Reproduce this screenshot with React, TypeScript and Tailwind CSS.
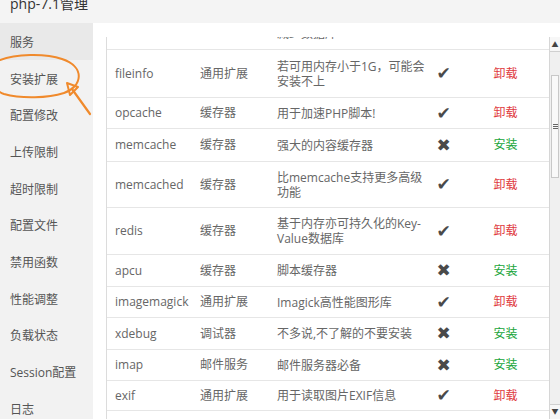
import React from "react";

type Row = {
  name: string;
  type: string;
  desc: string[];
  installed: boolean;
  h: number;
};

const rows: Row[] = [
  { name: "fileinfo", type: "通用扩展", desc: ["若可用内存小于1G，可能会", "安装不上"], installed: true, h: 48 },
  { name: "opcache", type: "缓存器", desc: ["用于加速PHP脚本!"], installed: true, h: 31 },
  { name: "memcache", type: "缓存器", desc: ["强大的内容缓存器"], installed: false, h: 33 },
  { name: "memcached", type: "缓存器", desc: ["比memcache支持更多高级", "功能"], installed: true, h: 46 },
  { name: "redis", type: "缓存器", desc: ["基于内存亦可持久化的Key-", "Value数据库"], installed: true, h: 47 },
  { name: "apcu", type: "缓存器", desc: ["脚本缓存器"], installed: false, h: 32 },
  { name: "imagemagick", type: "通用扩展", desc: ["Imagick高性能图形库"], installed: true, h: 31 },
  { name: "xdebug", type: "调试器", desc: ["不多说,不了解的不要安装"], installed: false, h: 32 },
  { name: "imap", type: "邮件服务", desc: ["邮件服务器必备"], installed: false, h: 31 },
  { name: "exif", type: "通用扩展", desc: ["用于读取图片EXIF信息"], installed: true, h: 30 },
];

const menu = [
  "服务",
  "安装扩展",
  "配置修改",
  "上传限制",
  "超时限制",
  "配置文件",
  "禁用函数",
  "性能调整",
  "负载状态",
  "Session配置",
  "日志",
];

const font = "font-['Open_Sans','Noto_Sans_CJK_SC',sans-serif]";

export default function App() {
  return (
    <div className={`relative w-[560px] h-[419px] overflow-hidden bg-white ${font}`}>
      {/* title bar */}
      <div className="h-[23px] bg-[#f4f4f4] overflow-hidden pl-[10px]">
        <div className="text-[14px] leading-[14px] mt-[-3px] text-[#333]">php-7.1管理</div>
      </div>

      <div className="flex h-[396px]">
        {/* sidebar */}
        <div className="w-[93px] bg-[#f2f2f2] flex flex-col">
          {menu.map((m, i) => (
            <div
              key={m}
              className={`h-[36.7px] shrink-0 flex items-center pl-[10px] pt-[3px] text-[12px] text-[#555] ${
                i === 0 ? "bg-[#e9e9e9]" : ""
              }`}
            >
              {m}
            </div>
          ))}
        </div>

        {/* content */}
        <div className="flex-1 pl-[13px] pt-[14px]">
          <div className="flex h-full">
            <div className="w-[443px] h-full overflow-hidden border-l border-[#dcdcdc] text-[12px] text-[#666]">
              {/* partially scrolled-away row */}
              <div className="h-[13px] overflow-hidden border-b border-[#e6e6e6] flex">
                <div className="w-[163px] shrink-0" />
                <div className="pl-[7px] mt-[-11px] leading-[15px] text-[#666] whitespace-nowrap">减少数据库</div>
              </div>
              {rows.map((r) => (
                <div
                  key={r.name}
                  style={{ height: r.h }}
                  className="flex items-center border-b border-[#e6e6e6] box-border"
                >
                  <div className="w-[86px] shrink-0 pl-[8px] whitespace-nowrap">{r.name}</div>
                  <div className="w-[77px] shrink-0 pl-[7px] whitespace-nowrap">{r.type}</div>
                  <div className="w-[155px] shrink-0 pl-[7px] leading-[15px] whitespace-nowrap">
                    {r.desc.map((d, i) => (
                      <div key={i}>{d}</div>
                    ))}
                  </div>
                  <div className="w-[37px] shrink-0 text-center font-['DejaVu_Sans',sans-serif] text-[17px] leading-none text-[#4a4a4a]">
                    {r.installed ? "✔" : "✖"}
                  </div>
                  <div
                    className={`w-[87px] shrink-0 text-center ${
                      r.installed ? "text-[#e0393e]" : "text-[#20a53a]"
                    }`}
                  >
                    {r.installed ? "卸载" : "安装"}
                  </div>
                </div>
              ))}
            </div>

            {/* scrollbar */}
            <div className="w-[11px] h-full bg-[#f0f0f0] border-l border-[#d6d6d6] flex flex-col">
              <div className="h-[15px] border-b border-[#d0d0d0] bg-[#f7f7f7] flex items-center justify-center text-[7px] leading-none text-[#444]">
                ▲
              </div>
              <div className="h-[23px]" />
              <div className="h-[103px] mx-[1px] bg-[#f9f9f9] border border-[#c8c8c8] flex items-center justify-center">
                <div className="flex flex-col gap-[1px]">
                  <div className="w-[5px] h-[1px] bg-[#666]" />
                  <div className="w-[5px] h-[1px] bg-[#666]" />
                  <div className="w-[5px] h-[1px] bg-[#666]" />
                </div>
              </div>
              <div className="flex-1" />
              <div className="h-[15px] bg-[#f7f7f7] border-t border-[#d0d0d0] flex items-start pt-[3px] justify-center text-[7px] leading-none text-[#444]">
                ▼
              </div>
            </div>
          </div>
        </div>
      </div>

      {/* orange hand-drawn annotation */}
      <svg
        className="absolute left-0 top-0 pointer-events-none"
        width="120"
        height="130"
        viewBox="0 0 120 130"
        fill="none"
      >
        <path
          d="M 64 93 C 82 87, 86 67, 62 59 C 45 53, 15 54, 0 60 C -14 66, -12 88, 4 94 C 22 99, 48 98, 64 93"
          stroke="#f08a2c"
          strokeWidth="2"
          strokeLinecap="round"
        />
        <path
          d="M 67 83 L 78 87 L 70 95 Z"
          stroke="#f08a2c"
          strokeWidth="2"
          strokeLinejoin="round"
        />
        <path d="M 72 89 L 90 114" stroke="#f08a2c" strokeWidth="2.2" strokeLinecap="round" />
      </svg>
    </div>
  );
}
